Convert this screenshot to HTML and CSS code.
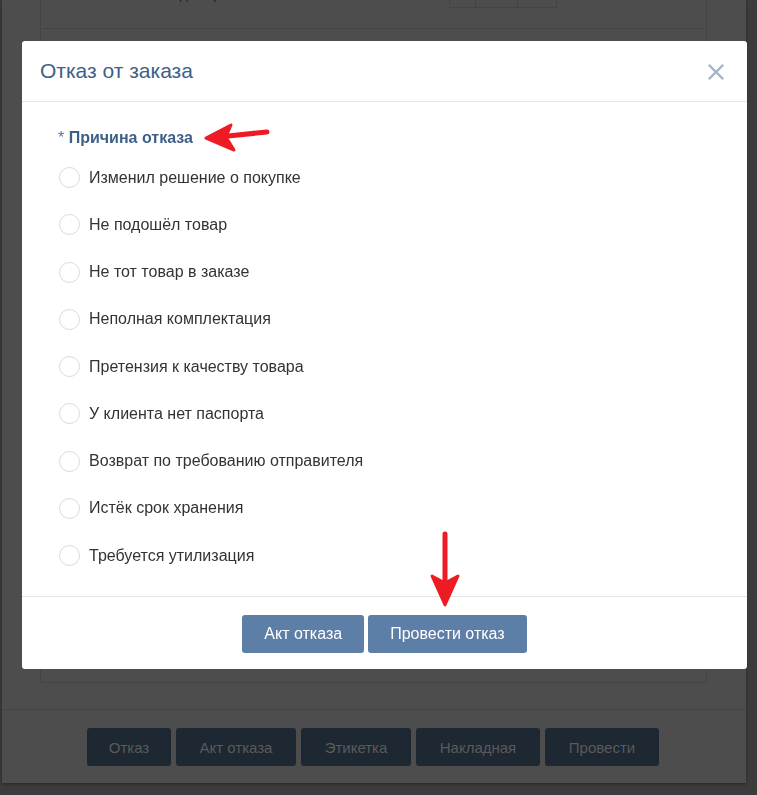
FILE: index.html
```html
<!DOCTYPE html>
<html lang="ru">
<head>
    <meta charset="UTF-8">
    <meta name="viewport" content="width=device-width, initial-scale=1.0">
    <title>Отказ от заказа</title>
    <link rel="stylesheet" href="styles.css">
</head>
<body>

<!-- Страница заказа под модальным окном -->
<div class="page">
    <div class="panel">
        <div class="panel-top">
            <span class="panel-text">Код отправления</span>
            <div class="mini-table">
                <span class="mini-cell c1"></span>
                <span class="mini-cell c2"></span>
                <span class="mini-cell c3"></span>
            </div>
        </div>
    </div>
    <div class="page-footer">
        <button class="page-button">Отказ</button>
        <button class="page-button">Акт отказа</button>
        <button class="page-button">Этикетка</button>
        <button class="page-button">Накладная</button>
        <button class="page-button">Провести</button>
    </div>
</div>

<!-- Модальное окно -->
<div class="modal">
    <div class="modal-header">
        <h4 class="modal-title">Отказ от заказа</h4>
        <span class="modal-close">
            <svg width="16" height="16" viewBox="0 0 16 16">
                <path d="M1.5 1.5 L14.5 14.5 M14.5 1.5 L1.5 14.5" stroke="#a3b3c5" stroke-width="2.4" stroke-linecap="round"/>
            </svg>
        </span>
    </div>
    <div class="modal-body">
        <div class="field-label"><span class="req">*</span> Причина отказа</div>
        <div class="radio-list">
            <label class="radio-row"><span class="radio"></span>Изменил решение о покупке</label>
            <label class="radio-row"><span class="radio"></span>Не подошёл товар</label>
            <label class="radio-row"><span class="radio"></span>Не тот товар в заказе</label>
            <label class="radio-row"><span class="radio"></span>Неполная комплектация</label>
            <label class="radio-row"><span class="radio"></span>Претензия к качеству товара</label>
            <label class="radio-row"><span class="radio"></span>У клиента нет паспорта</label>
            <label class="radio-row"><span class="radio"></span>Возврат по требованию отправителя</label>
            <label class="radio-row"><span class="radio"></span>Истёк срок хранения</label>
            <label class="radio-row"><span class="radio"></span>Требуется утилизация</label>
        </div>
    </div>
    <div class="modal-footer">
        <button class="modal-button">Акт отказа</button>
        <button class="modal-button">Провести отказ</button>
    </div>
</div>

<!-- Пометки красными стрелками -->
<svg class="marks" width="757" height="795" viewBox="0 0 757 795">
    <path d="M267 132 L228 136" stroke="#ed1c24" stroke-width="5" stroke-linecap="round" fill="none"/>
    <path d="M206 138 L231 125 L226 137 L234 150 Z" fill="#ed1c24" stroke="#ed1c24" stroke-width="3" stroke-linejoin="round"/>
    <path d="M445 534 L445 584" stroke="#ed1c24" stroke-width="5" stroke-linecap="round" fill="none"/>
    <path d="M445 605 L432 576 L445 583 L458 576 Z" fill="#ed1c24" stroke="#ed1c24" stroke-width="3" stroke-linejoin="round"/>
</svg>

</body>
</html>
```

FILE: styles.css
```css
body {
    margin: 0;
    height: 795px;
    overflow: hidden;
    background-color: #3c3c3c;
    font-family: "Liberation Sans", Arial, sans-serif;
}
.page {
    width: 744px;
    height: 783px;
    margin-left: 2px;
    background-color: #4d4d4d;
    box-shadow: 0 1px 3px rgba(0, 0, 0, 0.4);
    display: flex;
    flex-direction: column;
}
.panel {
    height: 683px;
    margin: 0 39px 0 38px;
    border: 1px solid #444;
    border-top: none;
    box-sizing: border-box;
}
.panel-top {
    height: 28px;
    margin: 0 1px;
    border-bottom: 1px solid #434343;
    position: relative;
}
.panel-text {
    position: absolute;
    left: 122px;
    top: -14px;
    font-size: 14px;
    color: #222;
}
.mini-table {
    position: absolute;
    left: 407px;
    top: 0;
    display: flex;
    height: 7px;
    border: 1px solid #444;
    border-top: none;
}
.mini-cell {
    border-left: 1px solid #444;
}
.mini-cell.c1 {
    width: 25px;
    border-left: none;
}
.mini-cell.c2 {
    width: 41px;
}
.mini-cell.c3 {
    width: 38px;
}
.page-footer {
    margin-top: 26px;
    border-top: 1px solid #444;
    padding: 18px 0 0 85px;
    display: flex;
    gap: 5px;
}
.page-button {
    height: 38px;
    padding: 0;
    font-family: "Liberation Sans", Arial, sans-serif;
    font-size: 15px;
    color: #5a5a5a;
    background-color: #1e2833;
    border: none;
    border-radius: 3px;
}
.page-button:nth-child(1) { width: 84px; }
.page-button:nth-child(2) { width: 120px; }
.page-button:nth-child(3) { width: 110px; }
.page-button:nth-child(4) { width: 124px; }
.page-button:nth-child(5) { width: 114px; }

.modal {
    position: fixed;
    left: 22px;
    top: 41px;
    width: 725px;
    height: 628px;
    background-color: #fff;
    border-radius: 3px;
    display: flex;
    flex-direction: column;
}
.modal-header {
    height: 60px;
    border-bottom: 1px solid #e5e5e5;
    display: flex;
    align-items: center;
    justify-content: space-between;
    padding: 0 23px 0 18px;
}
.modal-title {
    margin: 0;
    font-size: 21px;
    font-weight: normal;
    color: #3c6188;
}
.modal-close {
    display: flex;
    padding-top: 1px;
}
.modal-body {
    flex: 1;
    padding: 26px 0 0 36px;
}
.field-label {
    font-size: 16px;
    font-weight: bold;
    color: #3e6087;
    line-height: 20px;
    margin-bottom: 6px;
}
.req {
    font-weight: normal;
    color: #5b7699;
}
.radio-row {
    height: 47.25px;
    display: flex;
    align-items: center;
    font-size: 16px;
    color: #333;
}
.radio {
    width: 19px;
    height: 19px;
    border: 1px solid #d6d9dd;
    border-radius: 50%;
    margin: 0 9px 0 1px;
}
.modal-footer {
    border-top: 1px solid #e5e5e5;
    padding: 18px 0 16px;
    display: flex;
    justify-content: center;
    gap: 4px;
}
.modal-button {
    height: 38px;
    padding: 0 22px;
    font-family: "Liberation Sans", Arial, sans-serif;
    font-size: 16px;
    color: #fff;
    background-color: #5d7fa7;
    border: none;
    border-radius: 3px;
}
.marks {
    position: fixed;
    left: 0;
    top: 0;
    pointer-events: none;
}
```
